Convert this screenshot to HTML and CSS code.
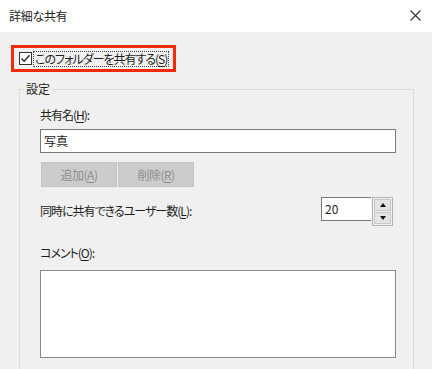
FILE: index.html
```html
<!DOCTYPE html>
<html lang="ja">
<head>
  <meta charset="UTF-8">
  <title>詳細な共有</title>
  <link rel="stylesheet" href="styles.css">
</head>
<body>
  <div class="dialog">
    <div class="titlebar">
      <span class="title">詳細な共有</span>
      <svg class="close" width="11" height="11" viewBox="0 0 11 11">
        <path d="M0.5 0.5 L10.5 10.5 M10.5 0.5 L0.5 10.5" stroke="#333" stroke-width="1.1" fill="none"/>
      </svg>
    </div>
    <div class="content">
      <div class="highlight">
        <span class="checkbox">
          <svg width="11" height="11" viewBox="0 0 11 11">
            <path d="M1.5 5.5 L4.2 8.3 L9.5 2.2" stroke="#222" stroke-width="1.3" fill="none"/>
          </svg>
        </span>
        <span class="focus">このフォルダーを共有する(<u>S</u>)</span>
      </div>

      <fieldset class="settings">
        <legend>設定</legend>
        <div class="label">共有名(<u>H</u>):</div>
        <div class="textbox">写真</div>
        <div class="buttons">
          <button class="btn" disabled>追加(<u>A</u>)</button>
          <button class="btn" disabled>削除(<u>R</u>)</button>
        </div>
        <div class="limit-row">
          <span class="label">同時に共有できるユーザー数(<u>L</u>):</span>
          <div class="spinner">
            <div class="spin-value">20</div>
            <div class="spin-buttons">
              <span class="spin-btn"><span class="arrow-up"></span></span>
              <span class="spin-btn"><span class="arrow-down"></span></span>
            </div>
          </div>
        </div>
        <div class="label comment-label">コメント(<u>O</u>):</div>
        <div class="textarea"></div>
      </fieldset>
    </div>
  </div>
</body>
</html>
```

FILE: styles.css
```css
html, body {
  margin: 0;
  padding: 0;
  height: 100%;
  overflow: hidden;
}

body {
  font-family: "Noto Sans CJK JP", "Noto Sans", sans-serif;
  font-feature-settings: "palt";
  font-size: 12px;
  color: #1e1e1e;
  background: #f0f0f0;
}

.titlebar {
  height: 32px;
  background: #fff;
  display: flex;
  align-items: center;
  justify-content: space-between;
  padding: 0 11px 0 9px;
}

.title {
  font-size: 12px;
  line-height: 16px;
  color: #222;
  letter-spacing: -0.3px;
}

.close {
  display: block;
  margin-top: -2px;
}

.content {
  padding: 13px 0 0 11px;
}

/* red callout round the checkbox */
.highlight {
  display: inline-flex;
  align-items: center;
  height: 21px;
  padding: 0 4px 0 5px;
  border: 3px solid #f52a0a;
}

.checkbox {
  width: 11px;
  height: 11px;
  border: 1px solid #333;
  background: #fff;
  display: flex;
  margin-right: 1px;
}

.focus {
  line-height: 14px;
  padding: 0 1px;
  border: 1px dotted #444;
  letter-spacing: -1px;
}

.settings {
  margin: 9px 18px 0 8px;
  padding: 10px 17px 30px 20px;
  border: 1px solid #dcdcdc;
  border-bottom: none;
  min-width: 0;
}

.settings legend {
  padding: 0 2px;
  margin-left: -16px;
  line-height: 16px;
}

.label {
  line-height: 16px;
  letter-spacing: -1px;
}

u {
  text-decoration-thickness: 1px;
  text-underline-offset: 2px;
}

.textbox {
  height: 22px;
  line-height: 22px;
  margin-top: 6px;
  padding: 0 3px;
  background: #fff;
  border: 1px solid #7a7a7a;
}

.buttons {
  display: flex;
  gap: 1px;
  margin-top: 9px;
  margin-left: 1px;
}

.btn {
  width: 76px;
  height: 25px;
  font: inherit;
  font-feature-settings: "palt";
  letter-spacing: -0.5px;
  color: #8c8c8c;
  background: #cccccc;
  border: 1px solid #c4c4c4;
  padding: 0;
}

.limit-row {
  display: flex;
  align-items: center;
  justify-content: space-between;
  margin-top: 12px;
  height: 24px;
}

.spinner {
  display: flex;
  margin-right: 3px;
}

.spin-value {
  width: 46px;
  height: 22px;
  line-height: 22px;
  padding-left: 3px;
  background: #fff;
  border: 1px solid #7a7a7a;
  border-right: none;
}

.spin-buttons {
  display: flex;
  flex-direction: column;
  gap: 1px;
  padding: 1px;
  border: 1px solid #b4b4b4;
  background: #f0f0f0;
  margin-left: 1px;
}

.spin-btn {
  width: 15px;
  height: 10px;
  background: #e3e3e3;
  border: 0.5px solid #c8c8c8;
  display: flex;
  align-items: center;
  justify-content: center;
}

.arrow-up {
  border-left: 3.5px solid transparent;
  border-right: 3.5px solid transparent;
  border-bottom: 4px solid #111;
}

.arrow-down {
  border-left: 3.5px solid transparent;
  border-right: 3.5px solid transparent;
  border-top: 4px solid #111;
}

.comment-label {
  margin-top: 22px;
}

.textarea {
  height: 86px;
  margin-top: 9px;
  background: #fff;
  border: 1px solid #8a8a8a;
}
```
